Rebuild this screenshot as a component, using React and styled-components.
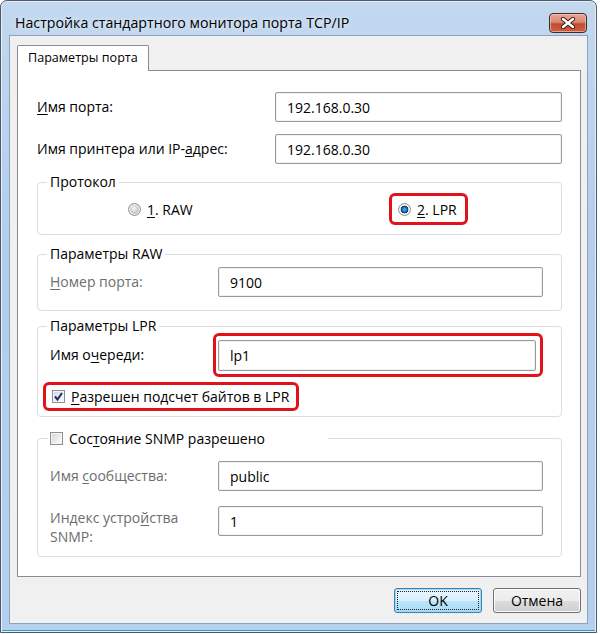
import React from 'react';
import styled, { createGlobalStyle } from 'styled-components';

const GlobalStyle = createGlobalStyle`
    body {
        margin: 0;
        background: #ffffff;
        font-family: "Open Sans", "Noto Sans", sans-serif;
    }
`;

const Radio = ({ checked }) => <RadioCircle $checked={checked} />;

const CheckBox = ({ checked }) => (
    <CheckSquare>
        {checked && (
            <svg width="11" height="11" viewBox="0 0 11 11">
                <polyline points="2,5.5 4.5,8.5 9,2" fill="none" stroke="#1a2f74" strokeWidth="2" />
            </svg>
        )}
    </CheckSquare>
);

const App = () => {
    return (
        <>
            <GlobalStyle />
            <Window>
                <TitleBar>
                    <Title>Настройка стандартного монитора порта TCP/IP</Title>
                    <CloseButton>
                        <svg width="16" height="12" viewBox="0 0 16 12">
                            <path d="M3 2 L13 10 M13 2 L3 10" stroke="#3b1b14" strokeWidth="4.2" strokeLinecap="round" />
                            <path d="M3 2 L13 10 M13 2 L3 10" stroke="#ffffff" strokeWidth="2.4" strokeLinecap="round" />
                        </svg>
                    </CloseButton>
                </TitleBar>
                <Client>
                    <Tab>Параметры порта</Tab>
                    <Panel>
                        <MainRow>
                            <Label><U>И</U>мя порта:</Label>
                            <TextBox>192.168.0.30</TextBox>
                        </MainRow>
                        <MainRow $mt={12}>
                            <Label>Имя принтера или IP-<U>а</U>дрес:</Label>
                            <TextBox>192.168.0.30</TextBox>
                        </MainRow>

                        <Group $mt={9}>
                            <Legend>Протокол</Legend>
                            <RadioRow>
                                <Option>
                                    <Radio />
                                    <span><U>1</U>. RAW</span>
                                </Option>
                                <Highlight $h={32} $pad="0 8px 0 6px">
                                    <Option>
                                        <Radio checked />
                                        <span><U>2</U>. LPR</span>
                                    </Option>
                                </Highlight>
                            </RadioRow>
                        </Group>

                        <Group $mt={10}>
                            <Legend>Параметры RAW</Legend>
                            <GroupBody $pt={4} $pb={13}>
                                <FieldRow>
                                    <Label $disabled><U>Н</U>омер порта:</Label>
                                    <TextBox>9100</TextBox>
                                </FieldRow>
                            </GroupBody>
                        </Group>

                        <Group $mt={6}>
                            <Legend>Параметры LPR</Legend>
                            <GroupBody $pt={0} $pb={5} $shift={-2}>
                                <FieldRow>
                                    <Label>Имя о<U>ч</U>ереди:</Label>
                                    <Highlight $pad="4px 4px 3px 2px" $ml={-5}>
                                        <TextBox $h={31}>lp1</TextBox>
                                    </Highlight>
                                </FieldRow>
                                <CheckHighlight>
                                    <Highlight $h={29} $pad="0 7px 0 6px">
                                        <Option>
                                            <CheckBox checked />
                                            <span><U>Р</U>азрешен подсчет байтов в LPR</span>
                                        </Option>
                                    </Highlight>
                                </CheckHighlight>
                            </GroupBody>
                        </Group>

                        <Group $mt={11}>
                            <CheckLegend>
                                <Option>
                                    <CheckBox />
                                    <span>Сос<U>т</U>ояние SNMP разрешено</span>
                                </Option>
                            </CheckLegend>
                            <GroupBody $pt={13} $pb={10}>
                                <FieldRow>
                                    <Label $disabled>Имя <U>с</U>ообщества:</Label>
                                    <TextBox>public</TextBox>
                                </FieldRow>
                                <FieldRow $mt={15} $top>
                                    <Label $disabled $multi>Индекс устро<U>й</U>ства<br />SNMP:</Label>
                                    <TextBox>1</TextBox>
                                </FieldRow>
                            </GroupBody>
                        </Group>
                    </Panel>
                    <ButtonRow>
                        <Button $default><FocusRect>OK</FocusRect></Button>
                        <Button>Отмена</Button>
                    </ButtonRow>
                </Client>
            </Window>
        </>
    );
};

export default App;

const Window = styled.div`
    width: 597px;
    height: 633px;
    box-sizing: border-box;
    border: 1px solid #4d5b6c;
    border-radius: 7px 7px 0 0;
    padding: 0 8px 8px 8px;
    background: linear-gradient(180deg, #c2d8ef 0%, #b3cdec 40%, #b5cfee 100%);
    box-shadow: inset 0 0 0 1px #e4eef9, inset 0 -2px 0 #2aa3b8;
    display: flex;
    flex-direction: column;
    overflow: hidden;
`;

const TitleBar = styled.div`
    flex: none;
    height: 34px;
    display: flex;
    align-items: flex-start;
    justify-content: space-between;
    padding: 0 1px 0 6px;
`;

const Title = styled.div`
    font-size: 14.2px;
    line-height: 20px;
    color: #000000;
    padding-top: 12px;
    text-shadow: 0 0 6px rgba(255, 255, 255, 0.9);
`;

const CloseButton = styled.div`
    width: 38px;
    height: 20px;
    box-sizing: border-box;
    margin-top: 12px;
    border: 1px solid #3e2a27;
    border-radius: 4px;
    background: linear-gradient(180deg, #e9a593 0%, #d98a74 45%, #c24b2f 55%, #cd5f3f 100%);
    box-shadow: inset 0 0 0 1px rgba(255, 210, 200, 0.6);
    display: flex;
    align-items: center;
    justify-content: center;
`;

const Client = styled.div`
    flex: 1;
    min-height: 0;
    background: #f0f0f0;
    border: 1px solid #8da2bd;
    padding: 9px 6px 8px 7px;
    display: flex;
    flex-direction: column;
`;

const Tab = styled.div`
    flex: none;
    width: 132px;
    height: 26px;
    box-sizing: border-box;
    margin-bottom: -1px;
    position: relative;
    z-index: 1;
    background: #ffffff;
    border: 1px solid #898c95;
    border-bottom: none;
    border-radius: 2px 2px 0 0;
    padding: 3px 0 0 10px;
    font-size: 12.6px;
    color: #000000;
`;

const Panel = styled.div`
    flex: none;
    background: #ffffff;
    border: 1px solid #898c95;
    padding: 21px 18px 19px 19px;
    display: flex;
    flex-direction: column;
`;

const MainRow = styled.div`
    display: grid;
    grid-template-columns: 238px 1fr;
    align-items: center;
    margin-top: ${p => p.$mt || 0}px;
`;

const Label = styled.div`
    font-size: 14px;
    line-height: ${p => (p.$multi ? '19px' : '18px')};
    color: ${p => (p.$disabled ? '#6d6d6d' : '#000000')};
    margin-top: ${p => (p.$multi ? '2px' : '0')};
`;

const U = styled.span`
    text-decoration: underline;
    text-underline-offset: 2px;
`;

const TextBox = styled.div`
    height: ${p => p.$h || 30}px;
    box-sizing: border-box;
    border: 1px solid #9a9a9a;
    border-radius: 2px;
    box-shadow: inset 0 0 0 1px #f1f1f1;
    background: #ffffff;
    padding: 0 11px;
    display: flex;
    align-items: center;
    font-size: 14px;
    color: #000000;
`;

const Group = styled.fieldset`
    margin: ${p => p.$mt || 0}px 0 0 0;
    padding: 0;
    min-inline-size: 0;
    border: 1px solid #d5dfe5;
    border-radius: 4px;
`;

const Legend = styled.legend`
    margin-left: 9px;
    padding: 0 3px;
    font-size: 14px;
    line-height: 18px;
    color: #000000;
`;

const CheckLegend = styled.legend`
    margin-left: 10px;
    padding: 0 2px;
    width: 280px;
    box-sizing: border-box;
    height: 20px;
    display: flex;
    align-items: center;
    font-size: 14px;
    color: #000000;
`;

const GroupBody = styled.div`
    padding: ${p => p.$pt}px 18px ${p => p.$pb}px 12px;
    margin-top: ${p => p.$shift || 0}px;
    display: flex;
    flex-direction: column;
`;

const FieldRow = styled.div`
    display: grid;
    grid-template-columns: 168px 1fr;
    align-items: ${p => (p.$top ? 'start' : 'center')};
    margin-top: ${p => p.$mt || 0}px;
`;

const RadioRow = styled.div`
    display: grid;
    grid-template-columns: 261px auto;
    justify-content: start;
    align-items: center;
    padding: 2px 0 9px 90px;
`;

const Option = styled.div`
    display: flex;
    align-items: center;
    gap: 6px;
    font-size: 14px;
    color: #000000;
    white-space: nowrap;
`;

const Highlight = styled.div`
    height: ${p => (p.$h ? `${p.$h}px` : 'auto')};
    box-sizing: border-box;
    border: 3px solid #e0121a;
    border-radius: 6px;
    padding: ${p => p.$pad};
    margin-left: ${p => p.$ml || 0}px;
    display: flex;
    flex-direction: column;
    justify-content: center;
`;

const CheckHighlight = styled.div`
    display: flex;
    margin: 5px 0 0 -7px;
`;

const RadioCircle = styled.span`
    width: 13px;
    height: 13px;
    box-sizing: border-box;
    border-radius: 50%;
    border: 1px solid #8e8f8f;
    flex: none;
    background: ${p =>
        p.$checked
            ? 'radial-gradient(circle, #4fc0f5 0, #1b7fcf 2px, #0e3a66 3.6px, #f4f4f4 4.2px, #dcdcdc 100%)'
            : 'radial-gradient(circle at 45% 40%, #f6f6f6 0, #d8d8d8 3px, #b9b9b9 6px)'};
    box-shadow: inset 0 0 0 1px #f7f7f7;
`;

const CheckSquare = styled.span`
    width: 13px;
    height: 13px;
    box-sizing: border-box;
    border: 1px solid #8e8f8f;
    flex: none;
    background: linear-gradient(135deg, #d4d4d4 0%, #eeeeee 60%, #ffffff 100%);
    box-shadow: inset 0 0 0 1px #f4f4f4;
    display: flex;
    align-items: center;
    justify-content: center;
`;

const ButtonRow = styled.div`
    flex: none;
    display: flex;
    justify-content: flex-end;
    gap: 11px;
    margin-top: 11px;
`;

const Button = styled.div`
    width: 88px;
    height: 25px;
    box-sizing: border-box;
    border: 1px solid ${p => (p.$default ? '#3c7fb1' : '#707070')};
    border-radius: 3px;
    background: ${p =>
        p.$default
            ? 'linear-gradient(180deg, #eaf6fd 0%, #d9f0fc 50%, #bee6fd 51%, #a7d9f5 100%)'
            : 'linear-gradient(180deg, #f2f2f2 0%, #ebebeb 50%, #dddddd 51%, #cfcfcf 100%)'};
    box-shadow: inset 0 0 0 1px ${p => (p.$default ? '#9fd6f3' : '#fcfcfc')};
    padding: 2px;
    display: flex;
    align-items: center;
    justify-content: center;
    font-size: 14px;
    color: #000000;
`;

const FocusRect = styled.div`
    width: 100%;
    height: 100%;
    box-sizing: border-box;
    border: 1px dotted #202020;
    display: flex;
    align-items: center;
    justify-content: center;
`;
